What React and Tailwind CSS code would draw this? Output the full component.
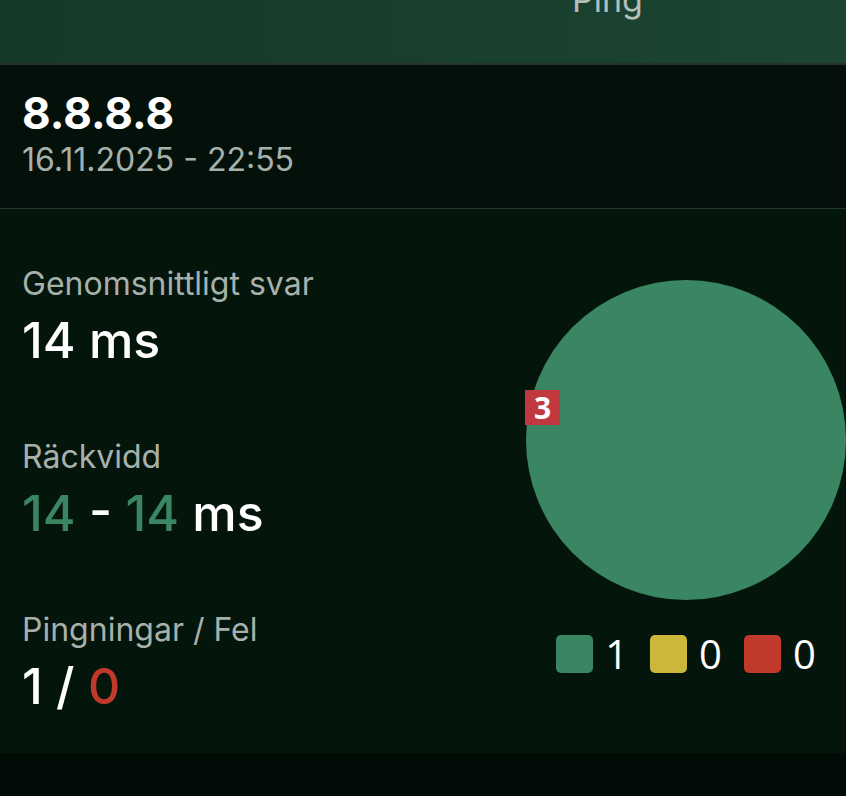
const legend = [
  { color: "bg-[#3a8562]", count: 1 },
  { color: "bg-[#cdb73b]", count: 0 },
  { color: "bg-[#c0392b]", count: 0 },
];

const Stat = ({ label, children }) => (
  <div className="flex flex-col gap-[11px]">
    <span className="text-[32px] leading-[36px] text-[#a7b1ab]">{label}</span>
    <span className="text-[50px] leading-[54px] font-medium text-white">
      {children}
    </span>
  </div>
);

const App = () => {
  return (
    <div
      className="w-[846px] h-[796px] overflow-hidden bg-[#020c07] flex flex-col"
      style={{ fontFamily: "Inter, 'Noto Sans', sans-serif" }}
    >
      {/* tab header, scrolled partly out of view */}
      <div className="h-[65px] shrink-0 overflow-hidden border-b-2 border-[#2a302d] bg-gradient-to-r from-[#163828] to-[#1c4532] pl-[572px]">
        <div className="mt-[-18px] text-[34px] leading-[36px] text-[#b4bfba]">
          Ping
        </div>
      </div>

      <div className="h-[144px] shrink-0 bg-[#03110a] border-b border-[#213a2e] pl-[22px] pt-[28px]">
        <div className="text-[44px] leading-[40px] font-bold text-white">
          8.8.8.8
        </div>
        <div className="mt-[7px] text-[32px] leading-[40px] text-[#a7b1ab]">
          16.11.2025 - 22:55
        </div>
      </div>

      <div className="h-[544px] shrink-0 bg-[#04150c] flex justify-between pl-[22px]">
        <div className="flex flex-col gap-[72px] pt-[57px]">
          <Stat label="Genomsnittligt svar">14 ms</Stat>
          <Stat label="Räckvidd">
            <span className="text-[#3a8562]">14</span> -{" "}
            <span className="text-[#3a8562]">14</span> ms
          </Stat>
          <Stat label="Pingningar / Fel">
            1 / <span className="text-[#c0392b]">0</span>
          </Stat>
        </div>

        <div className="w-[320px] flex flex-col items-center pt-[71px]">
          <div className="relative w-[320px] h-[320px] rounded-full bg-[#3a8562]">
            <div
              className="absolute left-[-1px] top-[110px] w-[35px] h-[35px] bg-[#c0393e] flex items-center justify-center text-[30px] leading-none font-bold text-white"
              style={{ fontFamily: "'Open Sans', sans-serif" }}
            >
              3
            </div>
          </div>
          <div
            className="mt-[35px] flex items-center gap-[22px]"
            style={{ fontFamily: "'Open Sans', sans-serif" }}
          >
            {legend.map((item, i) => (
              <div key={i} className="flex items-center gap-[12px]">
                <span className={`w-[37px] h-[38px] rounded-[5px] ${item.color}`} />
                <span className="text-[40px] leading-[38px] text-white">
                  {item.count}
                </span>
              </div>
            ))}
          </div>
        </div>
      </div>

      <div className="flex-1 bg-[#020c07]" />
    </div>
  );
};

export default App;
